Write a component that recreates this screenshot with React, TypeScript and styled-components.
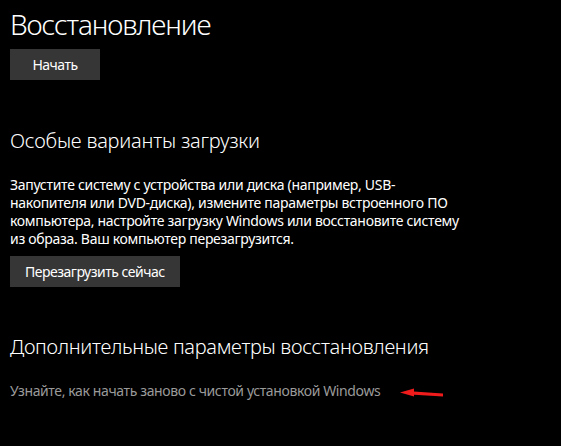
import React from "react";
import styled, { createGlobalStyle } from "styled-components";

const Global = createGlobalStyle`
  html, body {
    margin: 0;
    padding: 0;
    background: #000;
  }
  body {
    font-family: "Noto Sans", "Open Sans", sans-serif;
    color: #fff;
  }
`;

const Page = styled.div`
  display: flex;
  flex-direction: column;
  align-items: flex-start;
  padding: 6px 10px 0 10px;
  min-height: 446px;
  box-sizing: border-box;
  background: #000;
`;

const Title = styled.h1`
  margin: 0;
  font-size: 28px;
  line-height: 36px;
  font-weight: 300;
  letter-spacing: -1.1px;
`;

const Heading = styled.h2<{ $top: number; $spacing: number }>`
  margin: ${(p) => p.$top}px 0 0 0;
  font-size: 20px;
  line-height: 28px;
  font-weight: 300;
  letter-spacing: ${(p) => p.$spacing}px;
`;

const Text = styled.p`
  margin: 21px 0 0 0;
  width: 460px;
  font-size: 14px;
  line-height: 18px;
  letter-spacing: -0.3px;
`;

const Button = styled.button<{ $top: number }>`
  margin-top: ${(p) => p.$top}px;
  height: 31px;
  min-width: 90px;
  padding: 0 15px;
  border: none;
  background: #363636;
  color: #fff;
  font-family: inherit;
  font-size: 14px;
  letter-spacing: -0.5px;
  cursor: pointer;
`;

const LinkRow = styled.div`
  margin-top: 21px;
  display: flex;
  align-items: center;
  gap: 20px;
`;

const Link = styled.a`
  font-size: 14px;
  line-height: 18px;
  color: #9a9a9a;
  letter-spacing: -0.38px;
  text-decoration: none;
`;

const Arrow = () => (
  <svg width="44" height="12" viewBox="0 0 44 12" style={{ marginTop: 3 }}>
    <defs>
      <filter id="soft" x="-20%" y="-50%" width="140%" height="200%">
        <feGaussianBlur stdDeviation="0.6" />
      </filter>
    </defs>
    <g filter="url(#soft)" fill="#f01a1e" stroke="none">
      <path d="M10 4.2 L43 6.4 L43 9.6 L10 7.4 Z" />
      <path d="M0 5.4 L14 1.4 L14 9.6 Z" />
    </g>
  </svg>
);

export default function App() {
  return (
    <>
      <Global />
      <Page>
        <Title>Восстановление</Title>
        <Button $top={7}>Начать</Button>

        <Heading $top={47} $spacing={-0.2}>Особые варианты загрузки</Heading>
        <Text>
          Запустите систему с устройства или диска (например, USB-накопителя или
          DVD-диска), измените параметры встроенного ПО компьютера, настройте
          загрузку Windows или восстановите систему из образа. Ваш компьютер
          перезагрузится.
        </Text>
        <Button $top={8}>Перезагрузить сейчас</Button>

        <Heading $top={46} $spacing={-0.3}>Дополнительные параметры восстановления</Heading>
        <LinkRow>
          <Link href="#">Узнайте, как начать заново с чистой установкой Windows</Link>
          <Arrow />
        </LinkRow>
      </Page>
    </>
  );
}
